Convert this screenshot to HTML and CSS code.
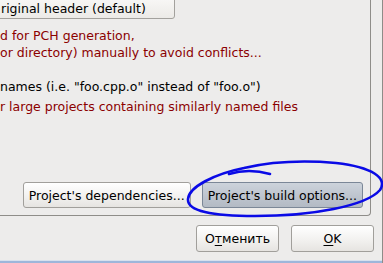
FILE: index.html
```html
<!DOCTYPE html>
<html lang="en">
<head>
    <meta charset="UTF-8">
    <title>Project build options</title>
    <link rel="stylesheet" href="styles.css">
</head>
<body>
    <div class="window">
        <div class="panel">
            <!-- precompiled header strategy combo -->
            <div class="combo">riginal header (default)</div>

            <p class="note">d for PCH generation,<br>or directory) manually to avoid conflicts...</p>

            <p class="option">names (i.e. "foo.cpp.o" instead of "foo.o")</p>
            <p class="hint">r large projects containing similarly named files</p>

            <div class="panel-buttons">
                <button class="btn">Project's dependencies...</button>
                <button class="btn btn-active">Project's build options...</button>
            </div>
        </div>

        <div class="actions">
            <button class="btn btn-dialog">O<u>т</u>менить</button>
            <button class="btn btn-dialog"><u>O</u>K</button>
        </div>

        <div class="taskbar"></div>

        <!-- hand drawn circle around the build options button -->
        <svg class="scribble" width="203" height="70" viewBox="180 155 203 70">
            <path d="M 270 174 C 256 170, 242 170, 229 174" />
            <path d="M 244 168 C 214 174, 189 187, 188 199 C 187 211, 212 216, 255 216 C 312 216, 366 206, 380 190 C 388 178, 372 167, 336 163 C 302 160, 270 162, 244 168" />
        </svg>
    </div>
</body>
</html>
```

FILE: styles.css
```css
body {
    margin: 0;
    width: 383px;
    height: 263px;
    overflow: hidden;
    background-color: #edeceb;
    font-family: "DejaVu Sans", sans-serif;
    font-size: 12.5px;
    color: #000;
}

.window {
    position: relative;
    width: 382px;
    height: 263px;
    border-right: 1px solid #8e8c88;
    display: flex;
    flex-direction: column;
}

.panel {
    width: 371px;
    height: 216px;
    box-sizing: border-box;
    border-right: 1px solid #8f8d89;
    border-bottom: 1px solid #8f8d89;
    border-bottom-right-radius: 4px;
    display: flex;
    flex-direction: column;
    flex-shrink: 0;
}

.combo {
    margin: -8px 0 0 -10px;
    padding-left: 10px;
    width: 185px;
    height: 27px;
    box-sizing: border-box;
    display: flex;
    align-items: center;
    padding-top: 6px;
    border: 1px solid #a3a19d;
    border-radius: 3px;
    background: linear-gradient(#fbfbfa, #eceae7);
}

.note,
.option,
.hint {
    margin: 0;
    line-height: 17px;
    white-space: nowrap;
}

.note {
    margin-top: 8px;
    color: #8b0000;
}

.option {
    margin-top: 17px;
}

.hint {
    margin-top: 3px;
    color: #8b0000;
}

.panel-buttons {
    margin-top: auto;
    display: flex;
    justify-content: flex-end;
    gap: 11px;
    padding: 0 7px 7px 0;
}

.btn {
    height: 26px;
    padding: 0 5px;
    font-family: inherit;
    font-size: 12.5px;
    color: #000;
    border: 1px solid #a19f9b;
    border-radius: 3px;
    background: linear-gradient(#ffffff, #f1f0ee 60%, #e6e4e1);
    white-space: nowrap;
}

.btn-active {
    border-color: #7b8797;
    background: linear-gradient(#cdd3db, #bcc3cd 60%, #b3bac4);
}

.btn-dialog {
    width: 83px;
    height: 27px;
}

.btn u {
    text-underline-offset: 2px;
}

.actions {
    display: flex;
    justify-content: flex-end;
    gap: 12px;
    padding: 9px 8px 0 0;
}

.taskbar {
    margin-top: auto;
    height: 2px;
    border-top: 1px solid #d7e1ee;
    background-color: #9db6da;
}

.scribble {
    position: absolute;
    left: 180px;
    top: 155px;
    fill: none;
    stroke: #0a0ae6;
    stroke-width: 2.6;
    stroke-linecap: round;
}
```
